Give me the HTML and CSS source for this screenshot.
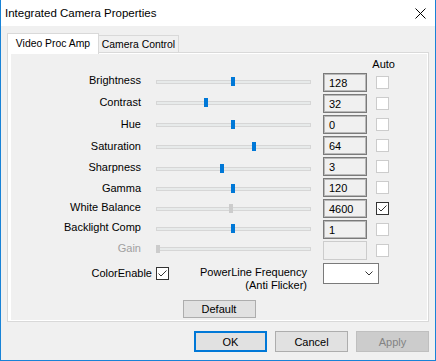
FILE: index.html
```html
<!DOCTYPE html>
<html lang="en">
<head>
  <meta charset="UTF-8" />
  <meta name="viewport" content="width=device-width, initial-scale=1" />
  <title>Integrated Camera Properties</title>
  <link rel="stylesheet" href="styles.css">
</head>
<body>
  <div class="window">

    <!-- title bar -->
    <header class="titlebar">
      <span class="title">Integrated Camera Properties</span>
      <svg class="close" width="11" height="11" viewBox="0 0 11 11" aria-label="Close">
        <path d="M0.5 0.5L10.5 10.5M10.5 0.5L0.5 10.5" stroke="#000" stroke-width="1" fill="none" />
      </svg>
    </header>

    <div class="client">
      <div class="tabs">
        <div class="tab active">Video Proc Amp</div>
        <div class="tab">Camera Control</div>
      </div>

      <div class="tab-body">
        <div class="page">

          <div class="controls">
            <!-- labels + trackbars -->
            <div class="sliders">
              <span class="prop-label">Brightness</span>
              <div class="slider"><div class="track"></div><div class="thumb" style="left:75px"></div></div>
              <span class="prop-label">Contrast</span>
              <div class="slider"><div class="track"></div><div class="thumb" style="left:48px"></div></div>
              <span class="prop-label">Hue</span>
              <div class="slider"><div class="track"></div><div class="thumb" style="left:75px"></div></div>
              <span class="prop-label">Saturation</span>
              <div class="slider"><div class="track"></div><div class="thumb" style="left:96px"></div></div>
              <span class="prop-label">Sharpness</span>
              <div class="slider"><div class="track"></div><div class="thumb" style="left:64px"></div></div>
              <span class="prop-label">Gamma</span>
              <div class="slider"><div class="track"></div><div class="thumb" style="left:75px"></div></div>
              <span class="prop-label">White Balance</span>
              <div class="slider"><div class="track"></div><div class="thumb off" style="left:73px"></div></div>
              <span class="prop-label">Backlight Comp</span>
              <div class="slider"><div class="track"></div><div class="thumb" style="left:75px"></div></div>
              <span class="prop-label disabled">Gain</span>
              <div class="slider"><div class="track"></div><div class="thumb off small" style="left:0px"></div></div>
            </div>

            <!-- value boxes + auto checkboxes -->
            <div class="values">
              <div class="auto-head">Auto</div>
              <div class="value-grid">
                <div class="value">128</div><span class="check"></span>
                <div class="value">32</div><span class="check"></span>
                <div class="value">0</div><span class="check"></span>
                <div class="value">64</div><span class="check"></span>
                <div class="value">3</div><span class="check"></span>
                <div class="value">120</div><span class="check"></span>
                <div class="value">4600</div>
                <span class="check on">
                  <svg width="11" height="11" viewBox="0 0 11 11"><path d="M1.5 5.5L4 8L9.5 2.5" stroke="#333" stroke-width="1" fill="none" /></svg>
                </span>
                <div class="value">1</div><span class="check"></span>
                <div class="value disabled"></div><span class="check"></span>
              </div>
            </div>
          </div>

          <div class="extras">
            <div class="color-enable">
              <span>ColorEnable</span>
              <span class="check on">
                <svg width="11" height="11" viewBox="0 0 11 11"><path d="M1.5 5.5L4 8L9.5 2.5" stroke="#333" stroke-width="1" fill="none" /></svg>
              </span>
            </div>
            <div class="powerline">PowerLine Frequency<br>(Anti Flicker)</div>
            <div class="combo">
              <svg width="8" height="5" viewBox="0 0 8 5"><path d="M0.5 0.5L4 4L7.5 0.5" stroke="#333" stroke-width="1" fill="none" /></svg>
            </div>
          </div>

          <div class="default-row">
            <button class="btn default-btn">Default</button>
          </div>

        </div>
      </div>

      <div class="dialog-buttons">
        <button class="btn ok">OK</button>
        <button class="btn">Cancel</button>
        <button class="btn" disabled>Apply</button>
      </div>
    </div>

  </div>
</body>
</html>
```

FILE: styles.css
```css
* {
  box-sizing: border-box;
}
body {
  margin: 0;
  padding: 0;
  font-family: "Liberation Sans", Arial, sans-serif;
  font-size: 11px;
  color: #000;
  background: #fff;
}

/* window frame */
.window {
  width: 436px;
  height: 361px;
  border: 1px solid #1883d7;
  border-top: none;
  display: flex;
  flex-direction: column;
  background: #f0f0f0;
}

.titlebar {
  height: 26px;
  background: #fff;
  display: flex;
  align-items: center;
  justify-content: space-between;
  padding: 0 9px 0 4px;
}
.title {
  font-size: 11.5px;
}
.close {
  display: block;
}

.client {
  flex: 1;
  padding: 7px 6px 0;
  display: flex;
  flex-direction: column;
}

/* tabs */
.tabs {
  display: flex;
  height: 20px;
  align-items: flex-start;
}
.tab {
  height: 18px;
  margin-top: 2px;
  padding: 0;
  border: 1px solid #d9d9d9;
  border-bottom: none;
  border-left: none;
  background: #f0f0f0;
  font-size: 10.4px;
  white-space: nowrap;
  display: flex;
  align-items: center;
  justify-content: center;
  width: 80px;
}
.tab.active {
  width: 92px;
  height: 21px;
  margin-top: 0;
  border-left: 1px solid #d9d9d9;
  background: #fff;
  position: relative;
  z-index: 1;
  padding-bottom: 2px;
}

.tab-body {
  margin-top: -1px;
  height: 270px;
  border: 1px solid #d9d9d9;
  background: #fff;
  padding: 1px 1px 1px 3px;
}
.page {
  height: 266px;
  background: #f0f0f0;
}

/* property rows */
.controls {
  display: flex;
}
.sliders {
  margin-top: 17px;
  display: grid;
  grid-template-columns: 130px 155px;
  grid-template-rows: 21px 22px 22px 22px 21px 20px 19px 21px 20px;
  column-gap: 15px;
  align-items: center;
}
.prop-label {
  text-align: right;
  line-height: 13px;
  margin-top: -2px;
}
.prop-label.disabled {
  color: #a0a0a0;
}
.slider {
  position: relative;
  height: 10px;
  display: flex;
  align-items: center;
}
.track {
  width: 100%;
  height: 4px;
  border: 1px solid #d6d6d6;
  background: #e7eaea;
}
.thumb {
  position: absolute;
  top: 0;
  width: 4px;
  height: 9px;
  background: #0078d7;
}
.thumb.off {
  background: #cccccc;
}
.thumb.small {
  top: 1px;
  height: 8px;
}

.values {
  margin-left: 12px;
  width: 66px;
}
.auto-head {
  height: 19px;
  padding-top: 3px;
  line-height: 14px;
  text-align: right;
  margin-right: -6px;
}
.value-grid {
  display: grid;
  grid-template-columns: 44px 13px;
  grid-auto-rows: 19px;
  column-gap: 9px;
  row-gap: 2px;
  align-items: center;
}
.value {
  height: 19px;
  border: 1px solid #7a7a7a;
  box-shadow: inset 0 0 0 1px #b9b9b9;
  padding-left: 5px;
  display: flex;
  align-items: center;
}
.value.disabled {
  border-color: #cccccc;
  box-shadow: none;
}

.check {
  width: 13px;
  height: 13px;
  border: 1px solid #cccccc;
  background: #fff;
  display: block;
}
.check.on {
  border-color: #333;
}
.check svg {
  display: block;
}

/* bottom settings */
.extras {
  margin-top: 3px;
  height: 29px;
  display: flex;
  align-items: flex-start;
}
.color-enable {
  width: 158px;
  margin-top: 4px;
  display: flex;
  justify-content: flex-end;
  align-items: center;
  gap: 4px;
  line-height: 13px;
}
.powerline {
  width: 138px;
  margin-top: 3px;
  text-align: right;
  line-height: 13px;
}
.combo {
  margin-left: 16px;
  width: 56px;
  height: 21px;
  border: 1px solid #7a7a7a;
  background: #fff;
  display: flex;
  align-items: center;
  justify-content: flex-end;
  padding-right: 5px;
}
.combo svg {
  display: block;
}

.default-row {
  margin-top: 8px;
  display: flex;
  justify-content: center;
}

/* buttons */
.btn {
  font-family: "Liberation Sans", Arial, sans-serif;
  font-size: 11px;
  color: #000;
  width: 73px;
  height: 21px;
  padding: 0;
  background: #e1e1e1;
  border: 1px solid #adadad;
  border-radius: 0;
}
.default-btn {
  height: 18px;
}
.btn.ok {
  border: 2px solid #0078d7;
}
.btn:disabled {
  background: #cccccc;
  border-color: #bfbfbf;
  color: #838383;
}

.dialog-buttons {
  margin-top: 9px;
  display: flex;
  justify-content: flex-end;
  gap: 8px;
}
```
